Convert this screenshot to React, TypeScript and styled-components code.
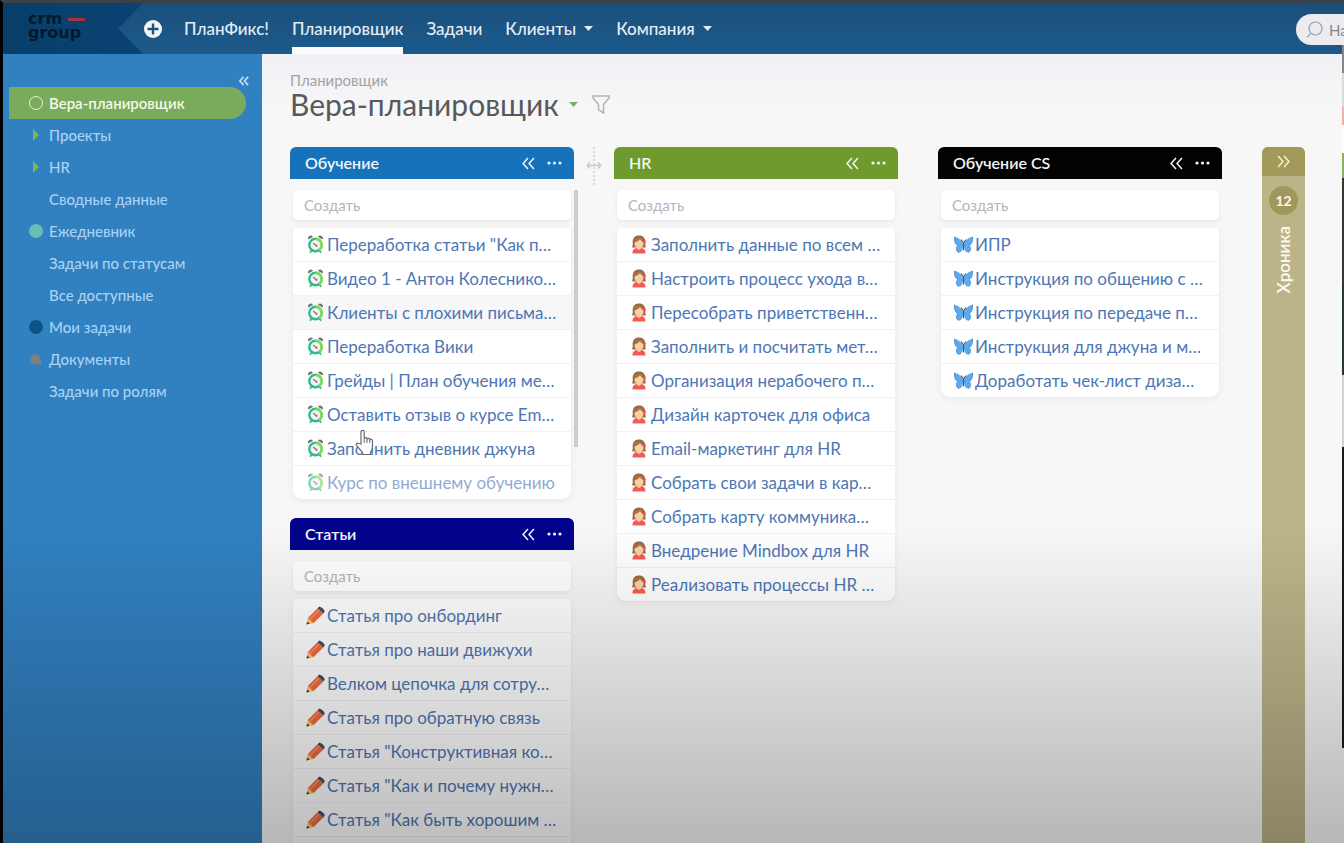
import React from 'react';
import styled, { createGlobalStyle, css } from 'styled-components';

const GlobalStyle = createGlobalStyle`
  *, *::before, *::after { box-sizing: border-box; }
  body { margin: 0; background: #000; font-family: Lato, "Open Sans", sans-serif; }
  button, input { font: inherit; color: inherit; background: none; border: 0; padding: 0; }
  button { cursor: pointer; }
  a { color: inherit; text-decoration: none; }
  ul { list-style: none; margin: 0; padding: 0; }
  h1, h2, p { margin: 0; font-weight: 400; }
  svg { display: block; flex: none; }
`;

const Page = styled.div`
  position: relative;
  display: flex;
  flex-direction: column;
  height: 100vh;
  overflow: hidden;
  border-top: 3px solid #3a4148;
  border-left: 3px solid #000;
`;

const Shade = styled.div`
  position: absolute;
  inset: 62% 0 0 0;
  pointer-events: none;
  background: linear-gradient(rgba(0, 0, 0, 0), rgba(0, 0, 0, 0.26));
`;

/* ---------- top bar ---------- */

const TopBar = styled.header`
  display: flex;
  flex: none;
  height: 51px;
  background: linear-gradient(90deg, #083e69, #0b4272 140px, #0b4272);
`;

const Logo = styled.a`
  flex: none;
  width: 115px;
  padding: 9px 0 0 25px;
  font: 700 16px/14px "DejaVu Sans", sans-serif;
  color: #04192d;
`;

const LogoLine = styled.span`
  display: flex;
  align-items: center;
  gap: 6px;
`;

const LogoDash = styled.i`
  width: 17px;
  height: 3px;
  background: #a83040;
`;

const NavArea = styled.div`
  display: flex;
  flex: 1;
  min-width: 0;
  padding-left: 26px;
  color: #e4eef6;
  background: linear-gradient(#1b4f7b, #1c5a8b);
  clip-path: polygon(0 50%, 25px 0, 100% 0, 100% 100%, 25px 100%);
`;

const AddButton = styled.button`
  display: flex;
  align-items: center;
  margin-right: 22px;
`;

const Nav = styled.nav`
  display: flex;
  gap: 23px;
  font-size: 17px;
  font-weight: 500;
  line-height: 50px;
  white-space: nowrap;
`;

const NavLink = styled.a<{ $active?: boolean }>`
  display: flex;
  align-items: center;
  gap: 8px;
  height: 51px;
  ${(p) => p.$active && css`box-shadow: inset 0 -7px 0 #fbfcfd;`}
`;

const Search = styled.label`
  display: flex;
  align-items: center;
  gap: 6px;
  width: 48px;
  height: 31px;
  margin: 11px 0 0 auto;
  padding-left: 10px;
  overflow: hidden;
  color: #8a8a8e;
  background: #ececf0;
  border-radius: 16px 0 0 16px;
`;

const SearchInput = styled.input`
  width: 120px;
  flex: none;
  font-size: 15px;
  outline: none;
  &::placeholder { color: #85858a; opacity: 1; }
`;

/* ---------- sidebar ---------- */

const Body = styled.div`
  display: flex;
  flex: 1;
  min-height: 0;
`;

const Sidebar = styled.aside`
  flex: none;
  width: 259px;
  padding: 16px 0 0 6px;
  color: #a9d2f3;
  background: #3180c0;
`;

const SidebarTop = styled.div`
  display: flex;
  justify-content: flex-end;
  height: 17px;
  padding: 5px 13px 0 0;
  color: #c3e0f7;
`;

const SideList = styled.ul`
  padding-right: 16px;
`;

const SideLink = styled.a<{ $active?: boolean }>`
  display: flex;
  align-items: center;
  gap: 6px;
  height: 32px;
  padding-left: 20px;
  font-size: 15px;
  font-weight: 500;
  border-radius: 0 16px 16px 0;
  ${(p) => p.$active && css`
    color: #f2f9ea;
    font-weight: 600;
    background: #7aab5c;
  `}
`;

const Marker = styled.span`
  display: flex;
  justify-content: center;
  width: 14px;
`;

const Dot = styled.i<{ $color: string; $outline?: boolean }>`
  width: 14px;
  height: 14px;
  border-radius: 50%;
  ${(p) => (p.$outline ? css`border: 1px solid ${p.$color};` : css`background: ${p.$color};`)}
`;

/* ---------- main area ---------- */

const Main = styled.main`
  display: flex;
  flex: 1;
  flex-direction: column;
  min-width: 0;
  overflow: hidden;
  padding: 16px 0 0 28px;
  background: linear-gradient(#f1f0f4, #f7f7f8 60px);
`;

const Crumb = styled.a`
  font-size: 15px;
  line-height: 20px;
  color: #a2a2a6;
`;

const TitleRow = styled.div`
  display: flex;
  align-items: center;
  margin-bottom: 29px;
`;

const Title = styled.h1`
  font-size: 30px;
  line-height: 28px;
  color: #59595c;
`;

const IconButton = styled.button`
  display: flex;
  align-items: center;
  justify-content: center;
`;

const TitleTools = styled.div`
  display: flex;
  align-items: center;
  gap: 14px;
  padding-left: 10px;
`;

const Board = styled.div`
  display: flex;
  flex: 1;
  align-items: flex-start;
  gap: 40px;
  min-height: 0;
`;

const Column = styled.div`
  position: relative;
  display: flex;
  flex: none;
  flex-direction: column;
  gap: 19px;
  width: 284px;
`;

const Panel = styled.section`
  position: relative;
`;

const PanelHead = styled.header<{ $color: string }>`
  display: flex;
  align-items: center;
  gap: 12px;
  height: 32px;
  padding: 0 12px 0 15px;
  color: #f1f5f9;
  background: ${(p) => p.$color};
  border-radius: 6px 6px 0 0;
`;

const PanelName = styled.h2`
  flex: 1;
  padding-bottom: 2px;
  font-size: 16px;
  font-weight: 600;
`;

const PanelBody = styled.div`
  display: flex;
  flex-direction: column;
  gap: 8px;
  padding: 11px 3px 0;
`;

const Create = styled.input`
  width: 100%;
  height: 30px;
  padding: 0 11px;
  font-size: 15px;
  background: #fff;
  border-radius: 5px;
  box-shadow: 0 2px 5px rgba(60, 60, 80, 0.07);
  outline: none;
  &::placeholder { color: #b4b4b6; opacity: 1; }
`;

const Cards = styled.ul`
  overflow: hidden;
  background: #fff;
  border-radius: 5px 5px 9px 9px;
  box-shadow: 0 2px 6px rgba(60, 60, 80, 0.08);
`;

const Card = styled.li<{ $hover?: boolean; $faded?: boolean }>`
  background: ${(p) => (p.$hover ? '#f7f7f9' : '#fff')};
  & + & { border-top: 1px solid #f1f1f4; }
  a { opacity: ${(p) => (p.$faded ? 0.62 : 1)}; }
`;

const CardLink = styled.a`
  display: flex;
  align-items: center;
  gap: 2px;
  height: 33px;
  padding: 0 10px 0 12px;
  font-size: 17px;
  color: #4e76b4;
  white-space: nowrap;
`;

const CardIcon = styled.span`
  display: flex;
  justify-content: center;
  flex: none;
  width: 20px;
`;

const ScrollThumb = styled.div`
  position: absolute;
  top: 43px;
  right: -4px;
  width: 4px;
  height: 257px;
  background: #cdcdd0;
`;

const ResizeGrip = styled.div`
  position: absolute;
  top: 0;
  left: calc(100% + 12px);
`;

const Collapsed = styled.section`
  display: flex;
  flex: none;
  flex-direction: column;
  align-items: center;
  align-self: stretch;
  width: 43px;
  color: #fbfaf0;
  background: #bcb489;
  border-radius: 6px 6px 0 0;
`;

const CollapsedHead = styled.button`
  display: flex;
  align-items: center;
  justify-content: center;
  width: 100%;
  height: 29px;
  color: #f6f2c8;
  background: #a29a5a;
  border-radius: 6px 6px 0 0;
`;

const Count = styled.span`
  width: 29px;
  height: 29px;
  margin: 10px 0 11px;
  font-size: 14px;
  font-weight: 700;
  line-height: 29px;
  text-align: center;
  background: #a0975a;
  border-radius: 50%;
`;

const VerticalName = styled.h2`
  font-size: 17px;
  font-weight: 600;
  line-height: 24px;
  writing-mode: vertical-rl;
  transform: rotate(180deg);
`;

const EdgeWindow = styled.div`
  position: absolute;
  top: 42px;
  right: 0;
  width: 2px;
  height: 703px;
  background: linear-gradient(
    #8a8488 0 28px, #d8dadb 28px 62px, #f0b0a4 62px 80px, #fdfdfd 80px 108px,
    #8cb063 108px 133px, #3b3630 133px 240px, #24382f 240px 330px,
    #d8cfd2 330px 402px, #161a1a 402px
  );
`;

const Pointer = styled.div`
  position: absolute;
  top: 426px;
  left: 351px;
`;

/* ---------- drawings ---------- */

const Chevrons = ({ right, size = 12 }: { right?: boolean; size?: number }) => (
  <svg width={size} height={size} viewBox="0 0 12 12" fill="none" stroke="currentColor" strokeWidth={size < 12 ? 2 : 1.4}>
    <path d={right ? 'M1 1l4.5 5L1 11M6.5 1L11 6l-4.5 5' : 'M5.5 1L1 6l4.5 5M11 1L6.5 6 11 11'} />
  </svg>
);

const Dots = () => (
  <svg width="15" height="4" viewBox="0 0 15 4" fill="currentColor">
    <circle cx="2" cy="2" r="1.6" /><circle cx="7.5" cy="2" r="1.6" /><circle cx="13" cy="2" r="1.6" />
  </svg>
);

const Caret = ({ color = 'currentColor' }: { color?: string }) => (
  <svg width="9" height="5" viewBox="0 0 9 5" fill={color}><path d="M0 0h9L4.5 5z" /></svg>
);

const Clock = () => (
  <svg width="17" height="19" viewBox="0 0 17 19" fill="none">
    <path d="M4.5 15.500l-1.500 2.300M12.500 15.500l1.500 2.300" stroke="#43b56e" strokeWidth="1.800" />
    <path d="M1.500 4.500A2.600 2.600 0 0 1 6 1.800zM15.500 4.500A2.600 2.600 0 0 0 11 1.800z" fill="#6c756f" />
    <circle cx="8.500" cy="10" r="6.200" fill="#f4f4f4" stroke="#2cbd88" strokeWidth="2.400" />
    <path d="M8.500 3.800a6.200 6.200 0 0 1 3.500 11.300" stroke="#84d95a" strokeWidth="2.400" />
    <path d="M6.200 8l2.500 2.300h1.800M8.700 10.300l1.300 1.600" stroke="#a06a70" strokeWidth="1.200" />
  </svg>
);

const Person = () => (
  <svg width="14" height="19" viewBox="0 0 14 19">
    <path d="M.8 9C0 3 3 .5 7 .5S14 3 13.200 9l.6 3.500H.2z" fill="#9a6a42" />
    <path d="M12 4l1.800 2-.8 4-1.800-3z" fill="#ee4d50" />
    <ellipse cx="7" cy="8.700" rx="4.500" ry="4.800" fill="#f7d0a4" />
    <path d="M2.300 7.500C4 7 7 6 8 4c1 2 2.500 3 3.700 3.500C11.500 3.500 9.500 2.500 7 2.500S2.500 3.500 2.300 7.500z" fill="#a97145" />
    <path d="M.5 18.500c0-4 1.700-5 4.300-5.500L7 14.500 9.200 13c2.600.5 4.300 1.500 4.300 5.500z" fill="#f65a56" />
    <path d="M5 12.500h4v1.200l-2 1.300-2-1.300z" fill="#f7d0a4" />
  </svg>
);

const Butterfly = () => (
  <svg width="19" height="18" viewBox="0 0 19 18">
    <path d="M9.300 8.500C7.500 3.500 3.500 1.200.4.800.2 5 1.300 8.600 4 9.500c-2.400 1.800-1.900 6.200.8 7C7.500 17 9 13 9.300 8.500z" fill="#58abf3" />
    <path d="M9.700 8.500c1.800-5 5.800-7.300 8.900-7.700.2 4.200-.9 7.800-3.600 8.700 2.400 1.800 1.900 6.200-.8 7-2.700.5-4.200-3.500-4.500-8z" fill="#58abf3" />
    <path d="M.4.800C.2 5 1.300 8.600 4 9.500c-2.400 1.800-1.900 6.200.8 7M18.600.8c.2 4.200-.9 7.800-3.600 8.700 2.400 1.800 1.900 6.200-.8 7" fill="none" stroke="#4a7fb8" strokeWidth=".8" />
    <path d="M9.500 6.500v8M9.500 7L7 3.500M9.500 7L12 3.500" stroke="#5d5254" strokeWidth="1.200" />
  </svg>
);

const Pencil = () => (
  <svg width="19" height="19" viewBox="0 0 19 19">
    <path d="M.5 18.500L1.800 12l5.600 5.200z" fill="#fbcb52" />
    <path d="M.5 18.500l.6-3 2.500 2.300z" fill="#3c3a3c" />
    <path d="M1.800 12L11.500 2.200l5.800 5.300-9.900 9.700z" fill="#f4683f" />
    <path d="M3.600 13.600L13.300 3.900" stroke="#f98f62" strokeWidth="1.500" />
    <path d="M11.500 2.200L13.300.4c2.200.5 4.700 2.600 5.500 5.100l-1.500 2z" fill="#4a4c54" />
  </svg>
);

const icons = { clock: Clock, person: Person, butterfly: Butterfly, pencil: Pencil };

/* ---------- data ---------- */

type PanelData = { name: string; color: string; icon: keyof typeof icons; items: string[]; scroll?: boolean; more?: boolean };

const study: PanelData = {
  name: 'Обучение', color: '#1672ba', icon: 'clock', scroll: true,
  items: ['Переработка статьи "Как п…', 'Видео 1 - Антон Колеснико…', 'Клиенты с плохими письма…', 'Переработка Вики',
    'Грейды | План обучения ме…', 'Оставить отзыв о курсе Em…', 'Заполнить дневник джуна', 'Курс по внешнему обучению'],
};
const articles: PanelData = {
  name: 'Статьи', color: '#02028c', icon: 'pencil', more: true,
  items: ['Статья про онбординг', 'Статья про наши движухи', 'Велком цепочка для сотру…', 'Статья про обратную связь',
    'Статья "Конструктивная ко…', 'Статья "Как и почему нужн…', 'Статья "Как быть хорошим …'],
};
const hr: PanelData = {
  name: 'HR', color: '#6f9b2d', icon: 'person',
  items: ['Заполнить данные по всем …', 'Настроить процесс ухода в…', 'Пересобрать приветственн…', 'Заполнить и посчитать мет…',
    'Организация нерабочего п…', 'Дизайн карточек для офиса', 'Email-маркетинг для HR', 'Собрать свои задачи в кар…',
    'Собрать карту коммуника…', 'Внедрение Mindbox для HR', 'Реализовать процессы HR …'],
};
const studyCs: PanelData = {
  name: 'Обучение CS', color: '#030202', icon: 'butterfly',
  items: ['ИПР', 'Инструкция по общению с …', 'Инструкция по передаче п…', 'Инструкция для джуна и м…', 'Доработать чек-лист диза…'],
};

const Arrow = <svg width="6" height="12" viewBox="0 0 6 12"><path d="M0 0l6 6-6 6z" fill="#7fb356" /></svg>;
const Leaf = (
  <svg width="13" height="13" viewBox="0 0 13 13">
    <path d="M1 3.500l3-2.500 2 1 2-1 2 3-1 2 3 3-1 3-3-1-3 .5-3-1L0 7z" fill="#80807f" />
  </svg>
);

const sideItems: { text: string; mark?: React.ReactNode; active?: boolean }[] = [
  { text: 'Вера-планировщик', mark: <Dot $color="#dff0cf" $outline />, active: true },
  { text: 'Проекты', mark: Arrow },
  { text: 'HR', mark: Arrow },
  { text: 'Сводные данные' },
  { text: 'Ежедневник', mark: <Dot $color="#68bdb4" /> },
  { text: 'Задачи по статусам' },
  { text: 'Все доступные' },
  { text: 'Мои задачи', mark: <Dot $color="#0f5488" /> },
  { text: 'Документы', mark: Leaf },
  { text: 'Задачи по ролям' },
];

function TaskPanel({ name, color, icon, items, scroll, more }: PanelData) {
  const Icon = icons[icon];
  return (
    <Panel>
      <PanelHead $color={color}>
        <PanelName>{name}</PanelName>
        <IconButton aria-label="Свернуть"><Chevrons size={13} /></IconButton>
        <IconButton aria-label="Меню"><Dots /></IconButton>
      </PanelHead>
      <PanelBody>
        <Create placeholder="Создать" aria-label={`Создать: ${name}`} />
        <Cards>
          {items.map((text, i) => (
            <Card key={i} $hover={scroll && i === 2} $faded={scroll && i === items.length - 1}>
              <CardLink href="#"><CardIcon><Icon /></CardIcon>{text}</CardLink>
            </Card>
          ))}
          {more && <Card><CardLink as="span" /></Card>}
        </Cards>
      </PanelBody>
      {scroll && <ScrollThumb />}
    </Panel>
  );
}

export default function App() {
  return (
    <Page>
      <GlobalStyle />
      <TopBar>
        <Logo href="#" aria-label="crm group">
          <LogoLine>crm<LogoDash /></LogoLine>
          <LogoLine>group</LogoLine>
        </Logo>
        <NavArea>
          <AddButton aria-label="Добавить">
            <svg width="18" height="18" viewBox="0 0 18 18">
              <circle cx="9" cy="9" r="9" fill="#f4f7fa" />
              <path d="M9 3.500v11M3.500 9h11" stroke="#1b5280" strokeWidth="2.400" />
            </svg>
          </AddButton>
          <Nav>
            <NavLink href="#">ПланФикс!</NavLink>
            <NavLink href="#" $active>Планировщик</NavLink>
            <NavLink href="#">Задачи</NavLink>
            <NavLink href="#">Клиенты<Caret /></NavLink>
            <NavLink href="#">Компания<Caret /></NavLink>
          </Nav>
          <Search>
            <svg width="17" height="17" viewBox="0 0 17 17" fill="none" stroke="#9b9ba0" strokeWidth="1.200">
              <circle cx="9.500" cy="7.500" r="6.500" /><path d="M5 12.200L1 16.300" />
            </svg>
            <SearchInput placeholder="Найти" aria-label="Найти" />
          </Search>
        </NavArea>
      </TopBar>

      <Body>
        <Sidebar>
          <SidebarTop><IconButton aria-label="Свернуть панель"><Chevrons size={10} /></IconButton></SidebarTop>
          <SideList>
            {sideItems.map((s) => (
              <li key={s.text}>
                <SideLink href="#" $active={s.active}><Marker>{s.mark}</Marker>{s.text}</SideLink>
              </li>
            ))}
          </SideList>
        </Sidebar>

        <Main>
          <Crumb href="#">Планировщик</Crumb>
          <TitleRow>
            <Title>Вера-планировщик</Title>
            <TitleTools>
              <IconButton aria-label="Выбрать планировщик"><Caret color="#7fae57" /></IconButton>
              <IconButton aria-label="Фильтр">
                <svg width="18" height="19" viewBox="0 0 18 19" fill="none" stroke="#b2b2b6" strokeWidth="1.500">
                  <path d="M1 1h16v2l-5.500 6.500V18l-5-3.500v-5L1 3z" />
                </svg>
              </IconButton>
            </TitleTools>
          </TitleRow>
          <Board>
            <Column>
              <TaskPanel {...study} />
              <TaskPanel {...articles} />
              <ResizeGrip>
                <svg width="16" height="38" viewBox="0 0 16 38" fill="none" stroke="#c8c8cc" strokeWidth="1.300">
                  <path d="M8 0v38" strokeDasharray="2 2" />
                  <path d="M1 18.500h14M4 15.500l-3 3 3 3M12 15.500l3 3-3 3" />
                </svg>
              </ResizeGrip>
            </Column>
            <Column><TaskPanel {...hr} /></Column>
            <Column><TaskPanel {...studyCs} /></Column>
            <Collapsed>
              <CollapsedHead aria-label="Развернуть"><Chevrons right size={13} /></CollapsedHead>
              <Count>12</Count>
              <VerticalName>Хроника</VerticalName>
            </Collapsed>
          </Board>
        </Main>
      </Body>

      <EdgeWindow />
      <Shade />
      <Pointer>
        <svg width="20" height="27" viewBox="0 0 20 27">
          <path
            d="M7 15V3c0-2.300 3.200-2.300 3.200 0v6.500c.5-1.300 2.700-1 2.800.5.600-1.200 2.600-.8 2.800.6.700-1 2.700-.5 2.700 1.300V17c0 3-1 4.500-2 6.500v2H8.500v-2L2.500 16.500c-1-1.500.6-3 2-2z"
            fill="#fff" stroke="#6a6a6e" strokeWidth="1.200"
          />
          <path d="M10.200 9.500V14M13 10.500V14M15.800 11V14" stroke="#6a6a6e" strokeWidth="1" />
        </svg>
      </Pointer>
    </Page>
  );
}
